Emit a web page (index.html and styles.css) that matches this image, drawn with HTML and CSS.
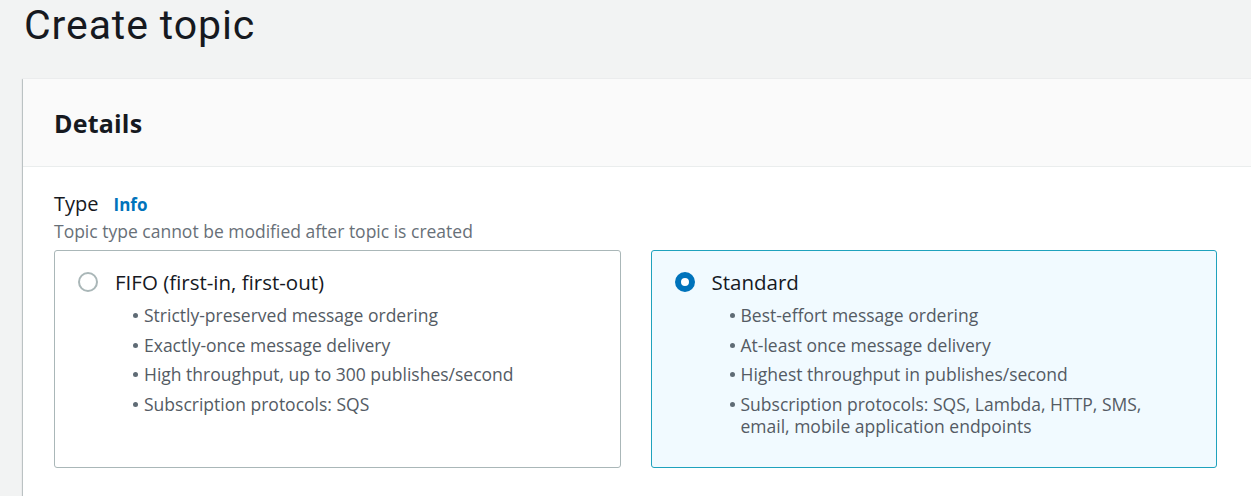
FILE: index.html
```html
<!DOCTYPE html>
<html lang="en">
<head>
<meta charset="utf-8">
<title>Create topic</title>
<link rel="stylesheet" href="styles.css">
</head>
<body>
<header class="page-header">
  <h1 class="page-title">Create topic</h1>
</header>
<section class="card">
  <div class="card-header">
    <h2 class="card-title">Details</h2>
  </div>
  <div class="card-body">
    <div class="field-label">
      <span class="label-text">Type</span>
      <a class="info-link" href="#">Info</a>
    </div>
    <div class="field-desc">Topic type cannot be modified after topic is created</div>
    <div class="tiles">
      <label class="tile">
        <div class="tile-head">
          <span class="radio"></span>
          <span class="tile-title">FIFO (first-in, first-out)</span>
        </div>
        <ul class="tile-list">
          <li>Strictly-preserved message ordering</li>
          <li>Exactly-once message delivery</li>
          <li>High throughput, up to 300 publishes/second</li>
          <li>Subscription protocols: SQS</li>
        </ul>
      </label>
      <label class="tile tile-selected">
        <div class="tile-head">
          <span class="radio radio-checked"></span>
          <span class="tile-title">Standard</span>
        </div>
        <ul class="tile-list">
          <li>Best-effort message ordering</li>
          <li>At-least once message delivery</li>
          <li>Highest throughput in publishes/second</li>
          <li>Subscription protocols: SQS, Lambda, HTTP, SMS, email, mobile application endpoints</li>
        </ul>
      </label>
    </div>
  </div>
</section>
</body>
</html>
```
FILE: styles.css
```css
* { box-sizing: border-box; }
html, body {
  margin: 0;
  padding: 0;
  overflow: hidden;
}
body {
  background: #f2f3f3;
  font-family: "Open Sans", "Noto Sans", sans-serif;
  color: #16191f;
  width: 1251px;
  height: 496px;
}
.page-header {
  height: 79px;
  padding: 1px 0 0 24px;
}
.page-title {
  margin: 0;
  font-family: Roboto, "Open Sans", sans-serif;
  font-size: 41px;
  font-weight: 400;
  letter-spacing: 0.9px;
  line-height: 48px;
  color: #16191f;
}
.card {
  margin-left: 23px;
  width: 1260px;
  background: #fff;
  box-shadow: 0 1px 1px 0 rgba(0, 28, 36, 0.3), -1px 0 1px 0 rgba(0, 28, 36, 0.18);
}
.card-header {
  height: 88px;
  display: flex;
  align-items: center;
  padding-left: 31px;
  background: #fafafa;
  border-bottom: 1px solid #eaeded;
}
.card-title {
  margin: 0;
  font-size: 25px;
  font-weight: 700;
  letter-spacing: 0.2px;
  line-height: 30px;
  color: #16191f;
}
.card-body {
  padding: 24px 0 40px 31px;
}
.field-label {
  display: flex;
  align-items: baseline;
  gap: 15px;
  line-height: 26px;
}
.label-text {
  font-size: 20px;
  color: #16191f;
}
.info-link {
  font-size: 17px;
  font-weight: 700;
  color: #0073bb;
  text-decoration: none;
}
.field-desc {
  font-size: 17.5px;
  line-height: 26px;
  color: #687078;
}
.tiles {
  margin-top: 6px;
  width: 1163px;
  display: grid;
  grid-template-columns: 1fr 1fr;
  gap: 30px;
}
.tile {
  display: block;
  border: 1px solid #aab7b8;
  border-radius: 3px;
  background: #fff;
  padding: 19px 23px 30px 23px;
}
.tile-selected {
  border-color: #1fa2bd;
  background: #f1faff;
}
.tile-head {
  display: flex;
  align-items: center;
  gap: 17px;
  height: 24px;
}
.radio {
  width: 20px;
  height: 20px;
  border-radius: 50%;
  border: 2px solid #aab7b8;
  background: #fff;
  flex: none;
}
.radio-checked {
  border: 6px solid #0073bb;
}
.tile-title {
  font-size: 20.5px;
  line-height: 24px;
  color: #16191f;
}
.tile-list {
  list-style: none;
  margin: 10px 0 0;
  padding: 0 0 0 66px;
  display: flex;
  flex-direction: column;
  gap: 7.5px;
}
.tile-list li {
  position: relative;
  font-size: 17.5px;
  line-height: 22px;
  color: #545b64;
  max-width: 430px;
}
.tile-list li::before {
  content: "";
  position: absolute;
  left: -11px;
  top: 9px;
  width: 5px;
  height: 5px;
  border-radius: 50%;
  background: #5f6b75;
}
```
